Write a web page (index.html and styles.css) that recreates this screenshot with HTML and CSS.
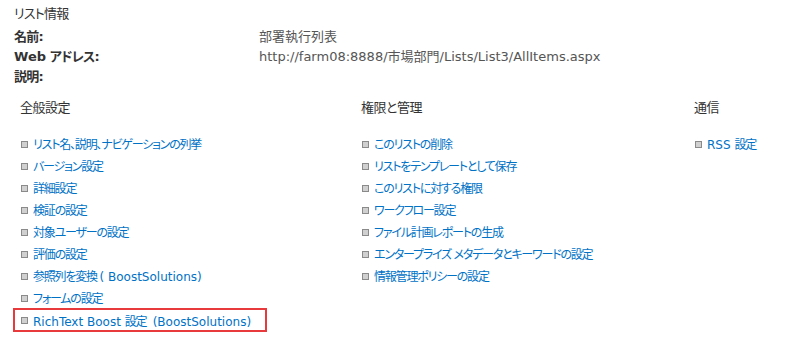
FILE: index.html
```html
<!DOCTYPE html>
<html lang="ja">
<head>
<meta charset="utf-8">
<link rel="stylesheet" href="styles.css">
</head>
<body>
<div class="page">
  <section class="info">
    <div class="info-title">リスト情報</div>
    <div class="info-grid">
      <div class="label">名前:</div><div class="value">部署執行列表</div>
      <div class="label"><span class="latin">Web</span> アドレス:</div><div class="value">http://farm08:8888/市場部門/Lists/List3/AllItems.aspx</div>
      <div class="label">説明:</div><div class="value"></div>
    </div>
  </section>
  <section class="settings">
    <div class="col col-general">
      <div class="col-title">全般設定</div>
      <ul class="links">
        <li><a href="#">リスト名、説明、ナビゲーションの列挙</a></li>
        <li><a href="#">バージョン設定</a></li>
        <li><a href="#">詳細設定</a></li>
        <li><a href="#">検証の設定</a></li>
        <li><a href="#">対象ユーザーの設定</a></li>
        <li><a href="#">評価の設定</a></li>
        <li><a href="#">参照列を変換 <span class="latin">( BoostSolutions)</span></a></li>
        <li><a href="#">フォームの設定</a></li>
        <li class="highlight"><a href="#"><span class="latin">RichText Boost </span>設定 <span class="latin">&nbsp;(BoostSolutions)</span></a></li>
      </ul>
    </div>
    <div class="col col-perm">
      <div class="col-title">権限と管理</div>
      <ul class="links">
        <li><a href="#">このリストの削除</a></li>
        <li><a href="#">リストをテンプレートとして保存</a></li>
        <li><a href="#">このリストに対する権限</a></li>
        <li><a href="#">ワークフロー設定</a></li>
        <li><a href="#">ファイル計画レポートの生成</a></li>
        <li><a href="#">エンタープライズ メタデータとキーワードの設定</a></li>
        <li><a href="#">情報管理ポリシーの設定</a></li>
      </ul>
    </div>
    <div class="col col-comm">
      <div class="col-title">通信</div>
      <ul class="links">
        <li><a href="#"><span class="latin">RSS </span>設定</a></li>
      </ul>
    </div>
  </section>
</div>
</body>
</html>
```

FILE: styles.css
```css
* { box-sizing: border-box; }
html, body { margin: 0; padding: 0; background: #fff; }
body {
  font-family: "DejaVu Sans", "Noto Sans CJK JP", sans-serif;
  font-feature-settings: "palt";
  font-size: 13px;
  color: #444;
}
.latin { letter-spacing: 0; }
.page { padding: 4px 0 0 14px; }
.info-title { height: 23px; line-height: 20px; color: #333; letter-spacing: -0.8px; }
.info-grid {
  display: grid;
  grid-template-columns: 245px 1fr;
  grid-template-rows: 20px 20px 20px;
  line-height: 20px;
}
.label { font-weight: bold; color: #333; letter-spacing: -0.8px; }
.value { color: #555; }
.settings {
  display: grid;
  grid-template-columns: 341px 333px 1fr;
  padding: 11px 0 0 6px;
}
.col-title { height: 20px; line-height: 20px; color: #333; letter-spacing: -0.5px; }
.links { list-style: none; margin: 14px 0 0; padding: 0; font-size: 12px; }
.links li {
  display: flex;
  align-items: center;
  height: 22px;
  padding-left: 13px;
  position: relative;
  white-space: nowrap;
}
.links li::before {
  content: "";
  position: absolute;
  left: 1px;
  top: 9px;
  width: 5px;
  height: 5px;
  background: #d0d0d0;
  border: 1px solid #8a8a8a;
}
.links a { color: #0072c6; text-decoration: none; letter-spacing: -1.2px; }
.links a .latin { letter-spacing: 0; }
.col-general .links li.highlight {
  margin-left: -7px;
  width: 254px;
  padding-left: 18px;
  border: 2px solid #e8393c;
  height: 24px;
}
.col-general .links li.highlight::before { left: 6px; top: 7px; }
```
